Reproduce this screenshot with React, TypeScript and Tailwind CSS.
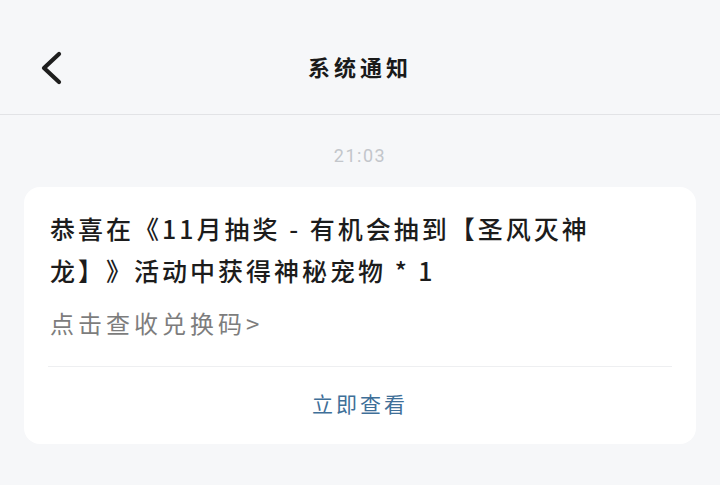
const cjk = "font-['Noto_Sans_CJK_SC','Noto_Sans',sans-serif]";

// Notification card
const NoticeCard = () => {
  return (
    <div className="mx-6 rounded-2xl bg-white">
      <div className="px-[26px] pt-5">
        <p className="whitespace-nowrap text-[25px] leading-[42px] tracking-[3px] font-medium text-[#1c1c1c] [text-spacing-trim:space-all]">
          恭喜在《11月抽奖 - 有机会抽到【圣风灭神
          <br />
          龙】》活动中获得神秘宠物 * 1
        </p>
        <p className="mt-[11px] text-[24px] leading-[42px] tracking-[4px] text-[#7d7d7d]">
          点击查收兑换码&gt;
        </p>
      </div>
      <div className="mx-6 mt-[22px] border-t border-[#eeeff1]" />
      <button className="flex h-[77px] w-full items-center justify-center pb-1 text-[21px] tracking-[3px] text-[#3f6f98]">
        立即查看
      </button>
    </div>
  );
};

export default function App() {
  return (
    <div className={`min-h-[485px] w-full bg-[#f6f7f9] ${cjk}`}>
      {/* Header */}
      <header className="relative flex h-[115px] items-center justify-center border-b border-[#e2e3e6] pt-[18px]">
        <button className="absolute left-[38px] top-[49px] text-[#1e1e1e]">
          <svg width="28" height="38" viewBox="0 0 28 38" fill="none">
            <polyline
              points="21,5 6,19 21,33"
              stroke="currentColor"
              strokeWidth="4.2"
              strokeLinecap="round"
              strokeLinejoin="round"
            />
          </svg>
        </button>
        <h1 className="text-[22px] font-bold tracking-[4px] text-[#1a1a1a]">系统通知</h1>
      </header>

      {/* Time */}
      <div className="flex h-[72px] items-center justify-center pt-2">
        <span className="font-['Roboto',sans-serif] text-[18px] tracking-[1.5px] text-[#c3c6cb]">21:03</span>
      </div>

      <NoticeCard />
    </div>
  );
}
